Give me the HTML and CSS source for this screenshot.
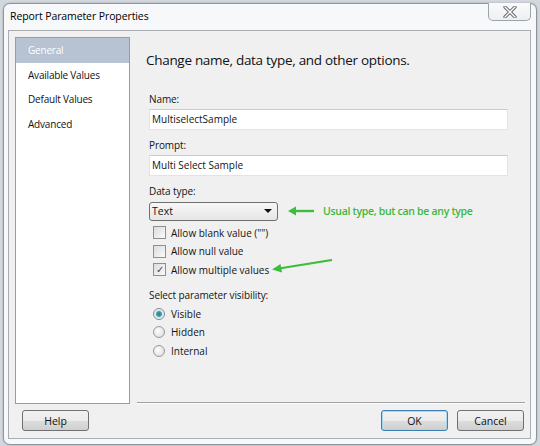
FILE: index.html
```html
<!DOCTYPE html>
<html>
<head>
  <meta charset="UTF-8">
  <title>Report Parameter Properties</title>
  <link rel="stylesheet" href="styles.css">
</head>
<body>
  <div class="window">
    <div class="titlebar">
      <span class="title">Report Parameter Properties</span>
      <button class="close-btn" aria-label="Close">
        <svg width="14" height="12" viewBox="0 0 14 12">
          <path d="M2 1 L12 11 M12 1 L2 11" stroke="#5a5f66" stroke-width="3.2" stroke-linecap="round"/>
          <path d="M2 1 L12 11 M12 1 L2 11" stroke="#ffffff" stroke-width="1.4" stroke-linecap="round"/>
        </svg>
      </button>
    </div>
    <div class="client">
      <div class="body-row">
        <ul class="nav">
          <li class="nav-item selected">General</li>
          <li class="nav-item">Available Values</li>
          <li class="nav-item">Default Values</li>
          <li class="nav-item">Advanced</li>
        </ul>
        <div class="main">
          <h2 class="heading">Change name, data type, and other options.</h2>

          <label class="field-label name-label">Name:</label>
          <div class="text-box">MultiselectSample</div>

          <label class="field-label">Prompt:</label>
          <div class="text-box">Multi Select Sample</div>

          <label class="field-label">Data type:</label>
          <div class="type-row">
            <div class="combo">
              <span>Text</span>
              <span class="combo-arrow"></span>
            </div>
            <svg class="note-arrow" width="28" height="10" viewBox="0 0 28 10">
              <path d="M27 5 L7 5" stroke="#3dbd3d" stroke-width="2.4"/>
              <path d="M1 5 L9 0.5 L9 9.5 Z" fill="#3dbd3d"/>
            </svg>
            <span class="note">Usual type, but can be any type</span>
          </div>

          <div class="checks">
            <div class="check-row"><span class="checkbox"></span>Allow blank value ("")</div>
            <div class="check-row"><span class="checkbox"></span>Allow null value</div>
            <div class="check-row">
              <span class="checkbox checked">&#10003;</span>Allow multiple values
              <svg class="note-arrow slant" width="62" height="14" viewBox="0 0 62 14">
                <path d="M61 1 L8 9.5" stroke="#3dbd3d" stroke-width="2.2"/>
                <path d="M1 10.5 L9.5 5 L11 13.5 Z" fill="#3dbd3d"/>
              </svg>
            </div>
          </div>

          <label class="field-label vis-label">Select parameter visibility:</label>
          <div class="radios">
            <div class="radio-row"><span class="radio on"></span>Visible</div>
            <div class="radio-row"><span class="radio"></span>Hidden</div>
            <div class="radio-row"><span class="radio"></span>Internal</div>
          </div>

          <div class="separator"></div>
        </div>
      </div>
      <div class="footer">
        <button class="btn">Help</button>
        <div class="footer-right">
          <button class="btn default">OK</button>
          <button class="btn">Cancel</button>
        </div>
      </div>
    </div>
  </div>
</body>
</html>
```

FILE: styles.css
```css
body {
  margin: 0;
  width: 540px;
  height: 446px;
  overflow: hidden;
  background: #d3d8df;
  font-family: 'Open Sans', 'Noto Sans', sans-serif;
  color: #141414;
}

.window {
  box-sizing: border-box;
  margin: 3px 0 0 3px;
  width: 534px;
  height: 442px;
  border: 1px solid #8d959f;
  border-radius: 7px;
  background: #f7f8fa;
  display: flex;
  flex-direction: column;
  box-shadow: 0 0 2px rgba(0, 0, 0, 0.25);
}

.titlebar {
  height: 26px;
  display: flex;
  align-items: flex-start;
  justify-content: space-between;
}

.title {
  font-size: 10.5px;
  letter-spacing: -0.1px;
  color: #000;
  margin: 5px 0 0 6px;
}

.close-btn {
  width: 43px;
  height: 18px;
  margin: -1px 5px 0 0;
  border: 1px solid #9ea4ab;
  border-top: none;
  border-radius: 0 0 5px 5px;
  background: linear-gradient(#fbfbfc, #eceef1);
  padding: 0;
  display: flex;
  align-items: center;
  justify-content: center;
}

.client {
  box-sizing: border-box;
  margin: 0 5px 5px 4px;
  flex: 1;
  border: 1px solid #a9adb2;
  background: #f0f0f0;
  padding: 6px 6px 6px 6px;
  display: flex;
  flex-direction: column;
}

.body-row {
  display: flex;
  height: 367px;
}

/* left page list */
.nav {
  box-sizing: border-box;
  width: 115px;
  margin: 0;
  padding: 0;
  list-style: none;
  background: #fff;
  border: 1px solid #9c9c9c;
}

.nav-item {
  height: 24.6px;
  line-height: 24.6px;
  padding-left: 12px;
  font-size: 10px;
  letter-spacing: -0.2px;
  color: #111;
}

.nav-item.selected {
  background: #b7c3d3;
  color: #fff;
}

.main {
  flex: 1;
  display: flex;
  flex-direction: column;
  padding-left: 19px;
}

.heading {
  margin: 13px 0 0 -3px;
  font-size: 13.5px;
  letter-spacing: -0.3px;
  font-weight: normal;
  line-height: 20px;
  color: #111;
}

.field-label {
  display: block;
  font-size: 10px;
  letter-spacing: -0.1px;
  line-height: 15px;
  margin-top: 7.5px;
}

.name-label {
  margin-top: 21.5px;
}

.text-box {
  box-sizing: border-box;
  width: 359px;
  height: 21px;
  margin-top: 2.5px;
  border: 1px solid #e2e3e6;
  border-top-color: #c9cbcf;
  background: #fff;
  font-size: 10px;
  line-height: 19px;
  padding-left: 2px;
}

.type-row {
  display: flex;
  align-items: center;
  margin-top: 3px;
  height: 19px;
}

.combo {
  box-sizing: border-box;
  width: 129px;
  height: 19px;
  border: 1px solid #6f6f6f;
  border-radius: 3px;
  background: linear-gradient(#f7f7f7, #e6e6e6);
  font-size: 10.5px;
  line-height: 17px;
  padding-left: 2px;
  display: flex;
  justify-content: space-between;
  align-items: center;
}

.combo-arrow {
  width: 0;
  height: 0;
  margin-right: 5px;
  border-left: 4px solid transparent;
  border-right: 4px solid transparent;
  border-top: 4px solid #111;
}

.note-arrow {
  margin-left: 9px;
  flex-shrink: 0;
}

.note {
  margin-left: 8px;
  font-size: 10.5px;
  font-weight: 600;
  letter-spacing: -0.3px;
  color: #3cb83c;
}

.checks {
  margin-top: 3px;
}

.check-row,
.radio-row {
  display: flex;
  align-items: center;
  height: 18.5px;
  font-size: 10px;
  padding-left: 4px;
}

.checkbox {
  box-sizing: border-box;
  width: 13px;
  height: 13px;
  margin-right: 5px;
  border: 1px solid #8f8f8f;
  background: linear-gradient(135deg, #dcdcdc, #fafafa);
  font-size: 10px;
  line-height: 11px;
  text-align: center;
  color: #3a4a64;
}

.check-row .slant {
  margin-left: 2px;
  margin-top: -8px;
}

.vis-label {
  margin-top: 9px;
}

.radios {
  margin-top: 1.5px;
}

.radio {
  box-sizing: border-box;
  width: 12px;
  height: 12px;
  margin-right: 6px;
  border-radius: 50%;
  border: 1px solid #9a9a9a;
  background: radial-gradient(circle at 40% 40%, #fdfdfd, #d8d8d8);
}

.radio.on {
  border-color: #7f8c9a;
  background: radial-gradient(circle, #2c7d86 0, #3fa0a8 2.5px, #dfe6ea 3.5px, #f4f6f8 6px);
}

.separator {
  margin-top: auto;
  margin-left: -12px;
  margin-right: -1px;
  height: 1px;
  background: #a0a0a0;
  border-bottom: 1px solid #fdfdfd;
}

.footer {
  display: flex;
  justify-content: space-between;
  margin-top: 6px;
  padding-left: 7px;
}

.footer-right {
  display: flex;
  gap: 9px;
}

.btn {
  box-sizing: border-box;
  width: 67px;
  height: 21px;
  padding: 0;
  border: 1px solid #707070;
  border-radius: 3px;
  background: linear-gradient(#f2f2f2 0%, #ebebeb 50%, #dddddd 51%, #cfcfcf 100%);
  font-family: 'Open Sans', 'Noto Sans', sans-serif;
  font-size: 10.5px;
  color: #111;
}

.btn.default {
  border-color: #3c7fb1;
  box-shadow: inset 0 0 0 1px #a6d8f2;
}
```
